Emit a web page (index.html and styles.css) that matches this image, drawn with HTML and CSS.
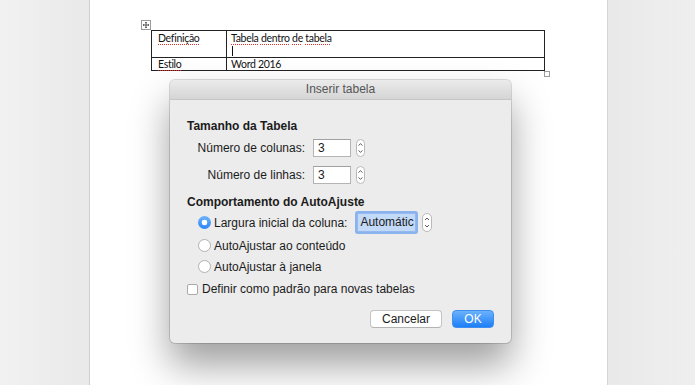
FILE: index.html
```html
<!DOCTYPE html>
<html lang="pt">
<head>
<meta charset="utf-8">
<title>Inserir tabela</title>
<link rel="stylesheet" href="styles.css">
</head>
<body>
<div class="desk">
  <div class="side side-left"></div>
  <div class="page">
    <div class="table-wrap">
      <div class="move-handle">
        <svg width="10" height="10" viewBox="0 0 10 10">
          <rect x="0.5" y="0.5" width="9" height="9" fill="#fff" stroke="#9a9a9a"/>
          <path d="M5 2v6M2 5h6" stroke="#555" stroke-width="1"/>
          <path d="M4 3l1-1 1 1M4 7l1 1 1-1M3 4l-1 1 1 1M7 4l1 1-1 1" stroke="#555" stroke-width="0.8" fill="none"/>
        </svg>
      </div>
      <table class="doc-table">
        <tr class="row-tall">
          <td class="col-a"><span class="spell">Definição</span></td>
          <td class="col-b"><span class="spell">Tabela</span> <span class="spell">dentro</span> <span class="spell">de</span> <span class="spell">tabela</span><span class="caret-line"><span class="caret"></span></span></td>
        </tr>
        <tr class="row-short">
          <td class="col-a"><span class="spell">Estilo</span></td>
          <td class="col-b">Word 2016</td>
        </tr>
      </table>
      <div class="resize-handle"></div>
    </div>
  </div>
  <div class="side side-right"></div>
</div>

<div class="dialog">
  <div class="titlebar">Inserir tabela</div>
  <div class="dialog-body">
    <div class="section-title">Tamanho da Tabela</div>
    <div class="size-row first">
      <span class="size-label">Número de colunas:</span>
      <span class="num-input">3</span>
      <svg class="stepper" width="9" height="18" viewBox="0 0 9 18">
        <rect x="0.5" y="0.5" width="8" height="17" rx="4" fill="#fff" stroke="#b9b9b9"/>
        <path d="M2.6 6.6L4.5 4.6 6.4 6.6M2.6 11.4L4.5 13.4 6.4 11.4" stroke="#4a4a4a" stroke-width="0.9" fill="none"/>
      </svg>
    </div>
    <div class="size-row second">
      <span class="size-label">Número de linhas:</span>
      <span class="num-input">3</span>
      <svg class="stepper" width="9" height="18" viewBox="0 0 9 18">
        <rect x="0.5" y="0.5" width="8" height="17" rx="4" fill="#fff" stroke="#b9b9b9"/>
        <path d="M2.6 6.6L4.5 4.6 6.4 6.6M2.6 11.4L4.5 13.4 6.4 11.4" stroke="#4a4a4a" stroke-width="0.9" fill="none"/>
      </svg>
    </div>
    <div class="section-title second-title">Comportamento do AutoAjuste</div>
    <div class="radio-row tall">
      <span class="radio on"></span>
      <span class="radio-label">Largura inicial da coluna:</span>
      <span class="auto-field">Automátic</span>
      <svg class="stepper wide" width="10" height="19" viewBox="0 0 10 19">
        <rect x="0.5" y="0.5" width="9" height="18" rx="4.5" fill="#fff" stroke="#b9b9b9"/>
        <path d="M3 7L5 5 7 7M3 12L5 14 7 12" stroke="#4a4a4a" stroke-width="0.9" fill="none"/>
      </svg>
    </div>
    <div class="radio-row">
      <span class="radio"></span>
      <span class="radio-label">AutoAjustar ao conteúdo</span>
    </div>
    <div class="radio-row">
      <span class="radio"></span>
      <span class="radio-label">AutoAjustar à janela</span>
    </div>
    <div class="check-row">
      <span class="checkbox"></span>
      <span class="check-label">Definir como padrão para novas tabelas</span>
    </div>
    <div class="button-row">
      <span class="btn btn-cancel">Cancelar</span>
      <span class="btn btn-ok">OK</span>
    </div>
  </div>
</div>
</body>
</html>
```

FILE: styles.css
```css
* { box-sizing: border-box; }

html, body {
  margin: 0;
  padding: 0;
  width: 695px;
  height: 385px;
  overflow: hidden;
}

body {
  background: #ececec;
  font-family: "Liberation Sans", Arial, sans-serif;
  position: relative;
}

.desk {
  display: flex;
  height: 385px;
}

.side {
  height: 100%;
}

.side-left {
  width: 89px;
  background: linear-gradient(to right, #f1f1f1, #e9e9e9);
}

.side-right {
  flex: 1;
  background: linear-gradient(to right, #e9e9e9, #efefef);
}

.page {
  width: 519px;
  height: 100%;
  background: #fff;
  border-left: 1px solid #cfcfcf;
  border-right: 1px solid #d6d6d6;
}

.table-wrap {
  margin-left: 51px;
  padding-top: 20px;
}

.move-handle {
  width: 10px;
  height: 10px;
  line-height: 0;
}

.move-handle svg { display: block; }

.doc-table {
  margin-left: 10px;
  border-collapse: collapse;
  font-family: Lato, "Liberation Sans", sans-serif;
  font-size: 10.5px;
  letter-spacing: -0.3px;
  color: #111;
  width: 394px;
}

.doc-table td {
  border: 1px solid #222;
  padding: 0 5px 0 6px;
  vertical-align: top;
  line-height: 12px;
}

.doc-table .col-a { width: 75px; }
.doc-table .col-b { padding-left: 4px; }

.row-tall td { height: 27px; padding-top: 1px; }
.row-short td { height: 13px; }

.spell {
  text-decoration: underline dotted #e0302c;
  text-decoration-thickness: 1px;
  text-underline-offset: 2px;
}

.caret-line {
  display: block;
  height: 13px;
  padding-top: 2px;
}

.caret {
  display: block;
  width: 1px;
  height: 10px;
  margin-left: 1px;
  background: #111;
}

.resize-handle {
  margin-left: 403px;
  margin-top: 0;
  width: 6px;
  height: 6px;
  border: 1px solid #9c9c9c;
  background: #fff;
}

/* dialog window */
.dialog {
  position: absolute;
  left: 170px;
  top: 80px;
  width: 341px;
  height: 263px;
  background: #ececec;
  border-radius: 5px;
  box-shadow: 0 22px 38px rgba(0, 0, 0, 0.38), 0 0 0 1px rgba(0, 0, 0, 0.14);
  overflow: hidden;
  color: #1b1b1b;
  font-size: 12px;
}

.titlebar {
  height: 20px;
  line-height: 19px;
  text-align: center;
  color: #555;
  background: linear-gradient(#ebebeb, #d5d5d5);
  border-bottom: 1px solid #c6c6c6;
}

.dialog-body {
  display: flex;
  flex-direction: column;
  padding: 18px 17px 14px 17px;
}

.section-title {
  font-weight: bold;
  height: 16px;
  line-height: 16px;
}

.second-title { margin-top: 9px; }

.size-row {
  display: flex;
  align-items: center;
  height: 20px;
}

.size-row.first { margin-top: 4px; }
.size-row.second { margin-top: 7px; }

.size-label {
  width: 118px;
  text-align: right;
  margin-right: 8px;
}

.num-input {
  width: 38px;
  height: 18px;
  line-height: 16px;
  padding-left: 4px;
  background: #fff;
  border: 1px solid #b4b4b4;
  border-top-color: #a0a0a0;
}

.stepper {
  margin-left: 5px;
  display: block;
}

.stepper.wide { margin-left: 6px; }

.radio-row {
  display: flex;
  align-items: center;
  height: 21px;
  padding-left: 11px;
}

.radio-row.tall { height: 25px; }

.radio {
  width: 13px;
  height: 13px;
  border-radius: 50%;
  background: #fff;
  border: 1px solid #b2b2b2;
  margin-right: 3px;
  flex: none;
}

.radio.on {
  border: none;
  background: radial-gradient(circle, #fff 0 2.6px, transparent 3.1px), linear-gradient(#6db4fb, #2a85f6);
}

.auto-field {
  margin-left: 10px;
  width: 59px;
  height: 19px;
  line-height: 17px;
  padding-left: 2px;
  white-space: nowrap;
  overflow: hidden;
  background: #c2d9f8;
  border: 1px solid #94b9ee;
  box-shadow: 0 0 0 2px rgba(105, 160, 238, 0.75);
  border-radius: 1px;
}

.check-row {
  display: flex;
  align-items: center;
  height: 22px;
  margin-top: 1px;
}

.checkbox {
  width: 11px;
  height: 11px;
  border: 1px solid #a9a9a9;
  border-radius: 2px;
  background: #fff;
  margin-right: 4px;
  flex: none;
}

.button-row {
  display: flex;
  justify-content: flex-end;
  align-items: center;
  gap: 10px;
  height: 20px;
  margin-top: 9px;
}

.btn {
  height: 18px;
  line-height: 16px;
  text-align: center;
  border-radius: 4px;
}

.btn-cancel {
  width: 72px;
  background: #fff;
  border: 1px solid #c4c4c4;
  border-bottom-color: #b3b3b3;
}

.btn-ok {
  width: 42px;
  color: #fff;
  background: linear-gradient(#6bb1fb, #1d7ff7);
  border: 1px solid #3f8ef0;
}
```
